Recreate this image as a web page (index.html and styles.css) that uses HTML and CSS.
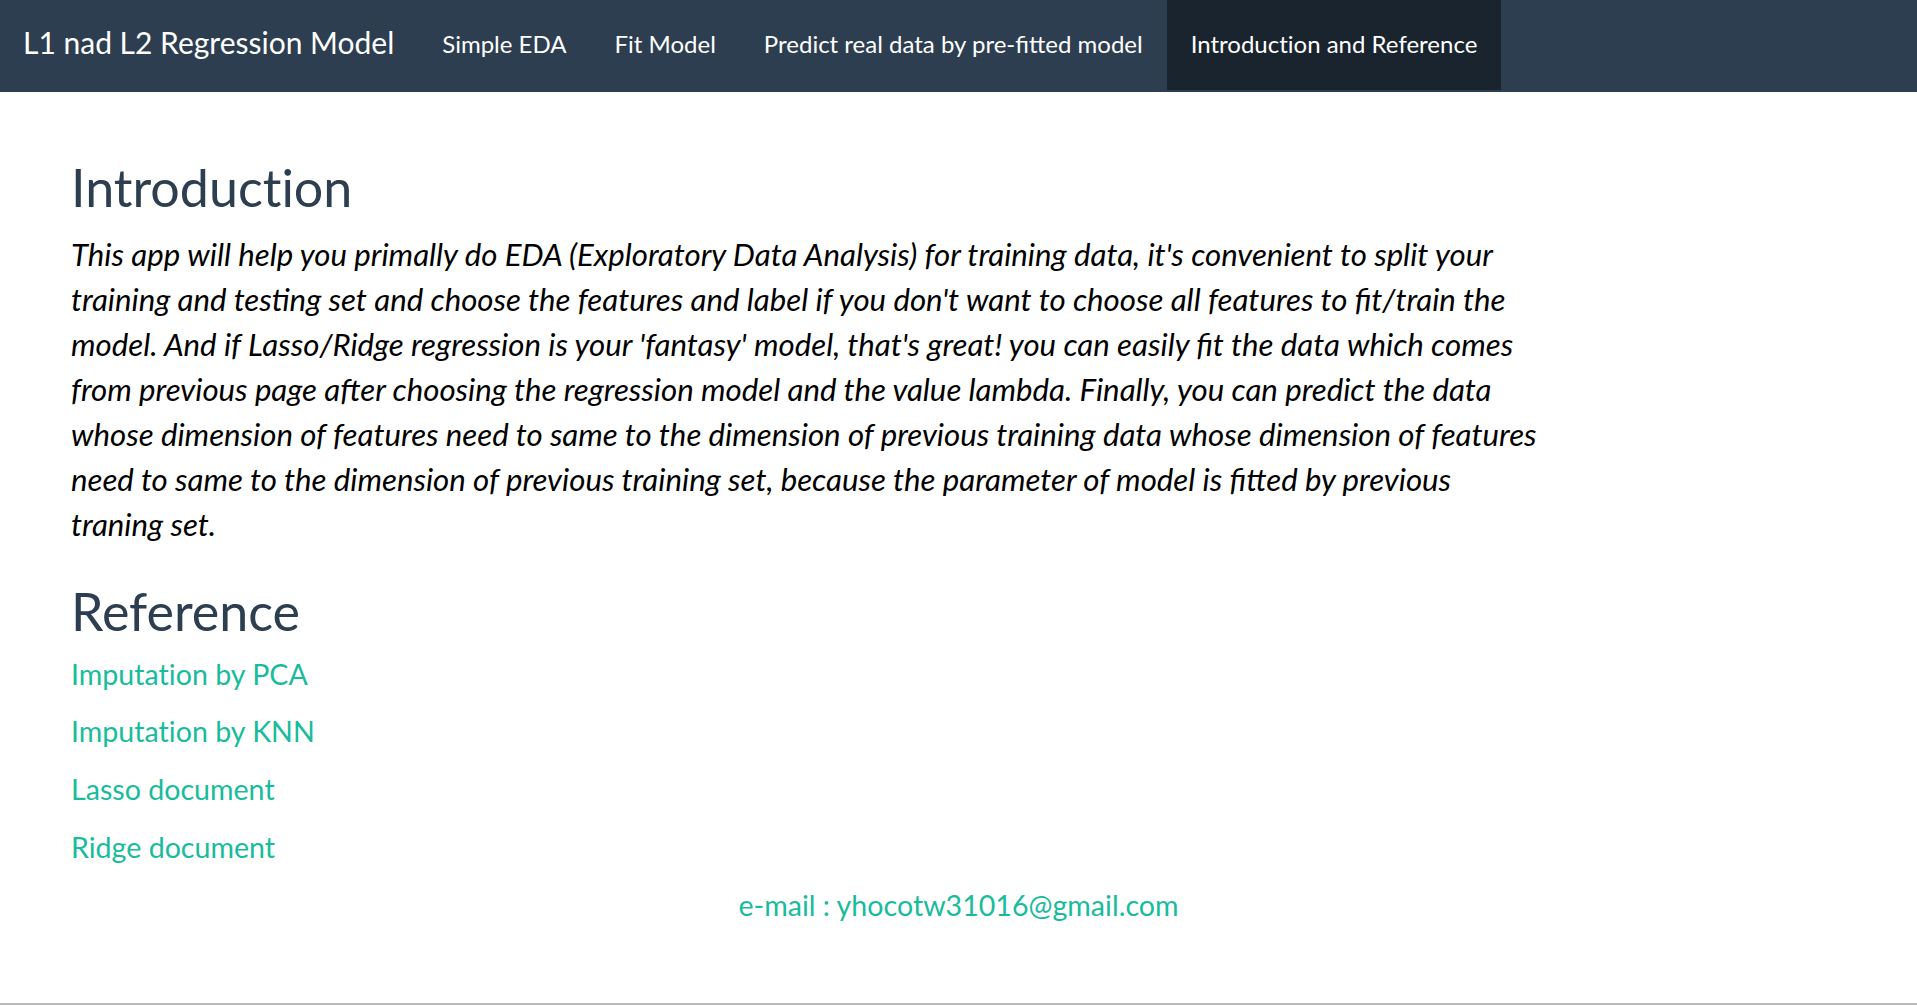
FILE: index.html
```html
<!DOCTYPE html>
<html>
<head>
<meta charset="utf-8">
<title>L1 nad L2 Regression Model</title>
<link rel="stylesheet" href="styles.css">
</head>
<body>
<nav class="navbar">
  <span class="brand">L1 nad L2 Regression Model</span>
  <ul class="nav">
    <li><a href="#">Simple EDA</a></li>
    <li><a href="#">Fit Model</a></li>
    <li><a href="#" class="lig">Predict real data by pre-fitted model</a></li>
    <li class="active"><a href="#">Introduction and Reference</a></li>
  </ul>
</nav>
<main class="content">
  <h2 class="title">Introduction</h2>
  <p class="intro">This app will help you primally do EDA (Exploratory Data Analysis) for training data, it's convenient to split your training and testing set and choose the features and label if you don't want to choose all features to fit/train the model. And if Lasso/Ridge regression is your 'fantasy' model, that's great! you can easily fit the data which comes from previous page after choosing the regression model and the value lambda. Finally, you can predict the data whose dimension of features need to same to the dimension of previous training data whose dimension of features need to same to the dimension of previous training set, because the parameter of model is fitted by previous traning set.</p>
  <h2 class="title ref-title">Reference</h2>
  <div class="refs">
    <a href="#">Imputation by PCA</a>
    <a href="#">Imputation by KNN</a>
    <a href="#">Lasso document</a>
    <a href="#">Ridge document</a>
  </div>
  <div class="email"><a href="#">e-mail : yhocotw31016@gmail.com</a></div>
</main>
<div class="bottom-line"></div>
</body>
</html>
```
FILE: styles.css
```css
html, body {
  margin: 0;
  padding: 0;
}
body {
  font-family: Lato, "Open Sans", sans-serif;
  font-variant-ligatures: no-common-ligatures;
  background: #ffffff;
  color: #2c3e50;
  min-height: 100vh;
  display: flex;
  flex-direction: column;
}
a {
  text-decoration: none;
}

/* navbar */
.navbar {
  display: flex;
  align-items: flex-start;
  height: 90px;
  background: #2c3e50;
  border-bottom: 2px solid #2c3e50;
}
.brand {
  display: block;
  padding: 26.7px 24px 0 23px;
  font-size: 30px;
  line-height: 30px;
  color: #ffffff;
  white-space: nowrap;
}
.nav {
  display: flex;
  list-style: none;
  margin: 0;
  padding: 0;
}
.nav a {
  display: block;
  box-sizing: border-box;
  height: 90px;
  padding: 26.5px 24px 0;
  font-size: 24px;
  line-height: 34px;
  color: #ffffff;
  white-space: nowrap;
}
.nav a.lig {
  font-variant-ligatures: common-ligatures;
}
.nav .active a {
  background: #1a242f;
}

/* content */
.content {
  flex: 1;
  padding: 0 71px;
}
.title {
  margin: 66.5px 0 16px;
  font-size: 52px;
  font-weight: 400;
  line-height: 1.1;
  color: #2c3e50;
}
.ref-title {
  margin-top: 36px;
  margin-bottom: 14px;
}
.intro {
  margin: 0;
  max-width: 1476px;
  font-size: 31.2px;
  line-height: 45px;
  font-style: italic;
  color: #000000;
  font-variant-ligatures: common-ligatures;
}
.refs {
  display: flex;
  flex-direction: column;
  align-items: flex-start;
  gap: 16px;
}
.refs a,
.email a {
  font-size: 28.6px;
  line-height: 41.6px;
  color: #18bc9c;
}
.email {
  margin-top: 17px;
  text-align: center;
}
.bottom-line {
  height: 2px;
  background: #bbbbbb;
}
```
